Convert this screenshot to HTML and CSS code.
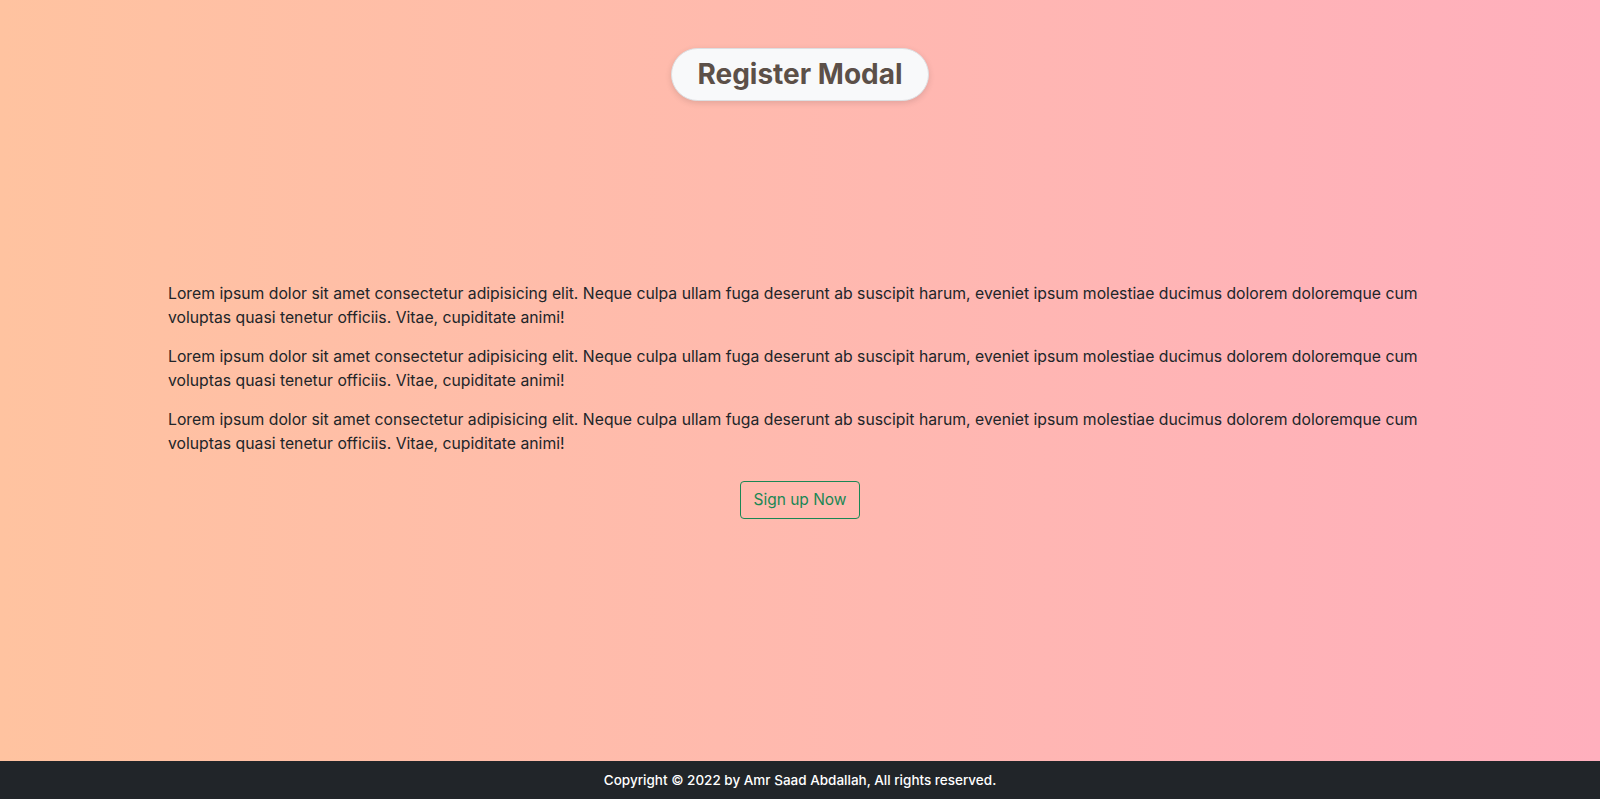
FILE: index.html
```html
<!DOCTYPE html>
<html lang="en">
<head>
<meta charset="utf-8">
<title>Register Modal</title>
<link rel="stylesheet" href="styles.css">
</head>
<body>
<main class="page">
  <header class="hero">
    <h1 class="title-pill">Register Modal</h1>
  </header>
  <section class="content">
    <p>Lorem ipsum dolor sit amet consectetur adipisicing elit. Neque culpa ullam fuga deserunt ab suscipit harum, eveniet ipsum molestiae ducimus dolorem doloremque cum voluptas quasi tenetur officiis. Vitae, cupiditate animi!</p>
    <p>Lorem ipsum dolor sit amet consectetur adipisicing elit. Neque culpa ullam fuga deserunt ab suscipit harum, eveniet ipsum molestiae ducimus dolorem doloremque cum voluptas quasi tenetur officiis. Vitae, cupiditate animi!</p>
    <p>Lorem ipsum dolor sit amet consectetur adipisicing elit. Neque culpa ullam fuga deserunt ab suscipit harum, eveniet ipsum molestiae ducimus dolorem doloremque cum voluptas quasi tenetur officiis. Vitae, cupiditate animi!</p>
    <div class="actions">
      <button class="btn-outline">Sign up Now</button>
    </div>
  </section>
</main>
<footer class="footer">Copyright © 2022 by Amr Saad Abdallah, All rights reserved.</footer>
</body>
</html>
```
FILE: styles.css
```css
* { box-sizing: border-box; }
html, body { height: 100%; }
body {
  margin: 0;
  font-family: Inter, "Noto Sans", sans-serif;
  color: #212529;
  background: linear-gradient(to right, #ffc3a0, #ffafbd);
  display: flex;
  flex-direction: column;
  min-height: 100vh;
}
.page {
  flex: 1;
  display: flex;
  flex-direction: column;
  align-items: center;
}
.hero {
  padding-top: 48px;
  display: flex;
  justify-content: center;
}
.title-pill {
  margin: 0;
  background: #f8f9fa;
  color: #5c5048;
  font-size: 28px;
  font-weight: 700;
  line-height: 33px;
  padding: 9px 25px;
  border-radius: 30px;
  border: 1px solid #dde0e3;
  box-shadow: 0 2px 6px rgba(0,0,0,0.12);
}
.content {
  width: 1264px;
  margin-top: 181px;
  font-size: 15.75px;
  line-height: 24px;
}
.content p {
  margin: 0 0 15px;
}
.actions {
  display: flex;
  justify-content: center;
  padding-top: 10px;
}
.btn-outline {
  font-family: inherit;
  font-size: 15.5px;
  line-height: 24px;
  padding: 6px 12px;
  color: #198754;
  background: transparent;
  border: 1px solid #198754;
  border-radius: 4px;
}
.footer {
  height: 38px;
  background: #212529;
  color: #fff;
  font-size: 13.5px;
  font-weight: 500;
  display: flex;
  align-items: center;
  justify-content: center;
}
```
